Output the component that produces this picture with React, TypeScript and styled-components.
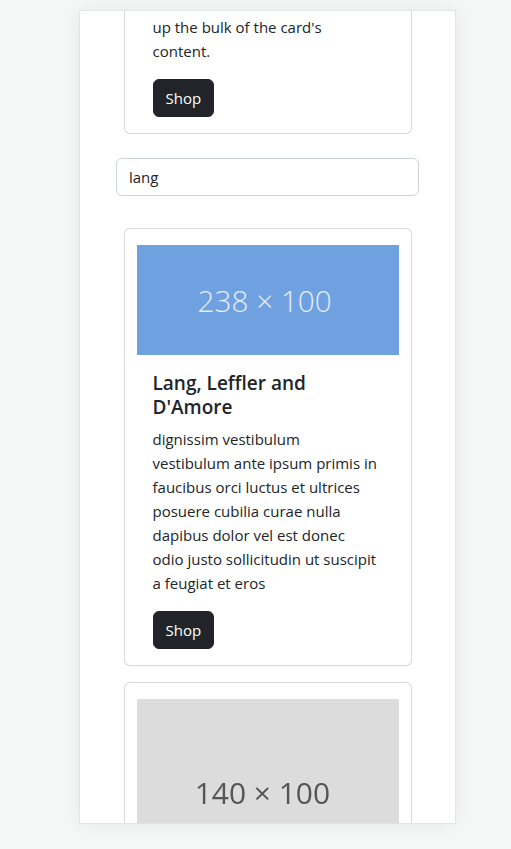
import React, { useLayoutEffect, useRef } from "react";
import styled, { createGlobalStyle } from "styled-components";

const GlobalStyle = createGlobalStyle`
  html, body {
    margin: 0;
    height: 100%;
    overflow: hidden;
    background: #f5f6f6;
    font-family: "Open Sans", "Noto Sans", sans-serif;
    color: #212529;
  }
`;

const Panel = styled.div`
  box-sizing: border-box;
  width: 377px;
  height: 814px;
  margin: 10px 0 0 79px;
  background: #fff;
  border: 1px solid #e3e4e4;
  box-shadow: 0 0 18px rgba(0, 0, 0, 0.06);
  overflow-y: auto;
  scrollbar-width: none;
  &::-webkit-scrollbar {
    display: none;
  }
`;

const List = styled.div`
  display: flex;
  flex-direction: column;
  align-items: center;
  padding: 16px 0;
`;

const Card = styled.div`
  box-sizing: border-box;
  width: 288px;
  padding: 16px 12px 0;
  border: 1px solid rgba(0, 0, 0, 0.15);
  border-radius: 6px;
  background: #fff;
  & + & {
    margin-top: 16px;
  }
`;

const CardBody = styled.div`
  padding: 16px;
`;

const Title = styled.h5`
  margin: 0 0 8px;
  font-size: 19px;
  font-weight: 600;
  line-height: 24px;
`;

const Text = styled.p`
  max-width: 227px;
  margin: 0 0 16px;
  font-size: 15px;
  line-height: 24px;
`;

const ShopButton = styled.button`
  display: inline-block;
  padding: 6px 12px;
  border: 1px solid #212529;
  border-radius: 6px;
  background: #212529;
  color: #fff;
  font-family: inherit;
  font-size: 15px;
  line-height: 24px;
  cursor: pointer;
`;

const Search = styled.input`
  box-sizing: border-box;
  width: 303px;
  height: 38px;
  margin: 24px 0 32px;
  padding: 6px 12px;
  border: 1px solid #ced4da;
  border-radius: 6px;
  font-family: inherit;
  font-size: 15px;
  line-height: 24px;
  color: #212529;
  outline: none;
`;

const Thumb = styled.svg<{ $blur?: boolean }>`
  display: block;
  width: 100%;
  height: auto;
  filter: ${(p) => (p.$blur ? "blur(0.6px)" : "none")};
`;

type Shot = { w: number; h: number; bg: string; fg: string; size: number; weight: number; blur?: boolean };

function Placeholder({ w, h, bg, fg, size, weight, blur }: Shot) {
  return (
    <Thumb viewBox={`0 0 ${w} ${h}`} $blur={blur}>
      <rect width={w} height={h} fill={bg} />
      <text
        x={w / 2 - 3}
        y={h / 2}
        fill={fg}
        fontFamily="'Open Sans', sans-serif"
        fontSize={size}
        fontWeight={weight}
        textAnchor="middle"
        dominantBaseline="central"
      >
        {w} × {h}
      </text>
    </Thumb>
  );
}

const blue: Shot = { w: 238, h: 100, bg: "#6fa1e1", fg: "#e4edf9", size: 27, weight: 300 };
const grey: Shot = { w: 140, h: 100, bg: "#dcdcdc", fg: "#555555", size: 16, weight: 400, blur: true };

type Product = { name: string; text: string; shot: Shot };

const first: Product = {
  name: "Card title",
  text: "Some quick example text to build on the card title and make up the bulk of the card's content.",
  shot: grey,
};

const results: Product[] = [
  {
    name: "Lang, Leffler and D'Amore",
    text:
      "dignissim vestibulum vestibulum ante ipsum primis in faucibus orci luctus et ultrices posuere cubilia curae nulla dapibus dolor vel est donec odio justo sollicitudin ut suscipit a feugiat et eros",
    shot: blue,
  },
  {
    name: "Langosh Group",
    text: "nulla ut erat id mauris vulputate elementum nullam varius nulla facilisi",
    shot: grey,
  },
];

const ProductCard = React.forwardRef<HTMLDivElement, { item: Product }>(({ item }, ref) => (
  <Card ref={ref}>
    <Placeholder {...item.shot} />
    <CardBody>
      <Title>{item.name}</Title>
      <Text>{item.text}</Text>
      <ShopButton>Shop</ShopButton>
    </CardBody>
  </Card>
));

export default function App() {
  const panelRef = useRef<HTMLDivElement>(null);
  const firstRef = useRef<HTMLDivElement>(null);

  useLayoutEffect(() => {
    const panel = panelRef.current;
    const card = firstRef.current;
    if (!panel || !card) return;
    panel.scrollTop += card.getBoundingClientRect().bottom - 134;
  }, []);

  return (
    <>
      <GlobalStyle />
      <Panel ref={panelRef}>
        <List>
          <ProductCard ref={firstRef} item={first} />
          <Search defaultValue="lang" />
          {results.map((r) => (
            <ProductCard key={r.name} item={r} />
          ))}
        </List>
      </Panel>
    </>
  );
}
